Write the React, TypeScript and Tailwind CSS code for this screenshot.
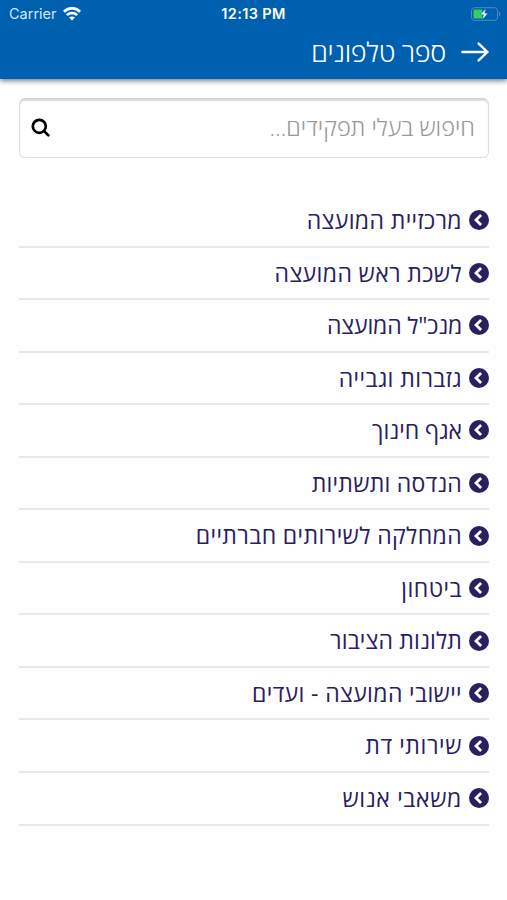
import { useState } from "react";

type Department = {
    name: string;
    tracking: string;
};

const departments: Department[] = [
    { name: "מרכזיית המועצה", tracking: "tracking-[0.38px]" },
    { name: "לשכת ראש המועצה", tracking: "tracking-[0.38px]" },
    { name: "מנכ\"ל המועצה", tracking: "tracking-[-0.17px]" },
    { name: "גזברות וגבייה", tracking: "tracking-[0.4px]" },
    { name: "אגף חינוך", tracking: "tracking-normal" },
    { name: "הנדסה ותשתיות", tracking: "tracking-[0.22px]" },
    { name: "המחלקה לשירותים חברתיים", tracking: "tracking-[0.4px]" },
    { name: "ביטחון", tracking: "tracking-[0.45px]" },
    { name: "תלונות הציבור", tracking: "tracking-[0.15px]" },
    { name: "יישובי המועצה - ועדים", tracking: "tracking-[0.37px]" },
    { name: "שירותי דת", tracking: "tracking-[0.6px]" },
    { name: "משאבי אנוש", tracking: "tracking-[0.65px]" },
];

function WifiIcon() {
    return (
        <svg viewBox="0 0 18 14" className="h-[14px] w-[18px]" fill="none" stroke="currentColor" strokeWidth="2.7">
            <path d="M0.9 4.7C5.4 0.2 12.6 0.2 17.1 4.7" />
            <path d="M3.9 8C6.7 5.3 11.3 5.3 14.1 8" />
            <path d="M9 13.6L6.1 10.6C7.7 9.2 10.3 9.2 11.9 10.6Z" fill="currentColor" stroke="none" />
        </svg>
    );
}

function BatteryIcon() {
    return (
        <svg viewBox="0 0 30 14" className="h-[14px] w-[30px]">
            <rect x="0.5" y="0.7" width="26" height="12.6" rx="3" fill="none" stroke="#4a8cc6" />
            <path d="M28 4.7C29.7 5.2 29.7 8.8 28 9.3Z" fill="#4a8cc6" />
            <rect x="2.5" y="2.5" width="9" height="9" rx="1.2" fill="#35cf5c" />
            <path d="M14.9 1.4L9.3 7.7H12.5L11.3 12.8L16.9 6.2H13.7Z" fill="#fff" stroke="#0060b0" strokeWidth="0.5" />
        </svg>
    );
}

function ChevronCircle() {
    return (
        <svg viewBox="0 0 20 20" className="size-[20px] shrink-0" fill="none">
            <circle cx="10" cy="10" r="10" fill="currentColor" />
            <path d="M12.1 5L7 10L12.1 15" stroke="#fff" strokeWidth="2.8" />
        </svg>
    );
}

function StatusBar() {
    return (
        <div dir="ltr" className="grid h-[27px] grid-cols-3 items-center font-['Inter',sans-serif] text-white">
            <div className="flex items-center gap-[6px] pl-[9px]">
                <span className="text-[14.5px] text-[#d3e7f8]">Carrier</span>
                <WifiIcon />
            </div>
            <span className="text-center text-[14.5px] font-semibold tracking-[0.35px]">12:13 PM</span>
            <div className="flex justify-end pr-[6px]">
                <BatteryIcon />
            </div>
        </div>
    );
}

export default function App() {
    const [query, setQuery] = useState("");

    return (
        <div dir="rtl" className="h-[900px] w-[507px] overflow-hidden bg-[#fefefe] font-['Open_Sans',sans-serif]">
            <header className="h-[79px] bg-[#0060b0] text-white shadow-[0_2px_5px_rgba(0,0,0,0.5)]">
                <StatusBar />
                <div className="flex h-[49px] items-center pr-[18px]">
                    <svg viewBox="0 0 28 20" className="h-[20px] w-[28px]" fill="none" stroke="currentColor" strokeWidth="2.4" strokeLinecap="round" strokeLinejoin="round">
                        <path d="M1.4 10H26.5M17.7 1.6L26.5 10L17.7 18.4" />
                    </svg>
                    <h1 className="mr-[15px] text-[27px] leading-[48px] font-light tracking-[-0.3px] whitespace-nowrap">ספר טלפונים</h1>
                </div>
            </header>

            <main className="pt-[19px] pr-[18px] pl-[19px]">
                <label className="flex h-[60px] items-center rounded-[6px] border border-[#dedede] border-t-[#cfcfcf] bg-white pr-[13px] pl-[11px] shadow-[inset_0_2px_1px_#dcdcdc]">
                    <input
                        value={query}
                        onChange={(e) => setQuery(e.target.value)}
                        placeholder="חיפוש בעלי תפקידים..."
                        className="min-w-0 flex-1 text-[23.6px] font-light outline-none placeholder:text-[#999]"
                    />
                    <svg viewBox="0 0 20 20" className="h-[20px] w-[20px]" fill="none" stroke="#000" strokeWidth="2.7" strokeLinecap="round">
                        <circle cx="8.3" cy="8.3" r="6.5" />
                        <path d="M13 13L17.4 17.4" />
                    </svg>
                </label>

                <ul className="mt-[37px]">
                    {departments.map((d) => (
                        <li key={d.name} className="flex h-[52.55px] items-center gap-[7px] border-b-2 border-[#e8e8e8] text-[#29205f]">
                            <ChevronCircle />
                            <span className={`text-[23px] whitespace-nowrap ${d.tracking}`}>{d.name}</span>
                        </li>
                    ))}
                </ul>
            </main>
        </div>
    );
}
